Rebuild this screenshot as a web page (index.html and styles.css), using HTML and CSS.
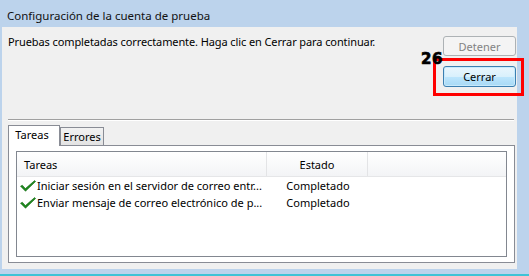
FILE: index.html
```html
<html>
<head>
    <meta charset="utf-8">
    <title>Configuración de la cuenta de prueba</title>
    <link rel="stylesheet" href="styles.css">
</head>
<body>
    <div class="window">
        <div class="titlebar">Configuración de la cuenta de prueba</div>
        <div class="content">
            <div class="top">
                <p class="message">Pruebas completadas correctamente. Haga clic en Cerrar para continuar.</p>
                <div class="buttons">
                    <button class="btn" disabled>Detener</button>
                    <button class="btn btn-default">Cerrar</button>
                </div>
            </div>
            <div class="separator"></div>
            <div class="tabs">
                <div class="tab tab-active">Tareas</div>
                <div class="tab">Errores</div>
            </div>
            <div class="panel">
                <div class="list">
                    <div class="list-head">
                        <div class="col-task">Tareas</div>
                        <div class="col-state">Estado</div>
                        <div class="col-rest"></div>
                    </div>
                    <div class="row">
                        <div class="col-task">
                            <svg class="check" viewBox="0 0 16 12" width="16" height="12">
                                <path d="M0.5 6.2 L2.3 5.2 L5.4 8.6 L14.6 0.6 L15.6 1.5 L5.5 11.2 Z" fill="#1f8a1f" stroke="#126812" stroke-width="0.6" stroke-linejoin="round"/>
                            </svg>
                            <span>Iniciar sesión en el servidor de correo entr...</span>
                        </div>
                        <div class="col-state">Completado</div>
                    </div>
                    <div class="row">
                        <div class="col-task">
                            <svg class="check" viewBox="0 0 16 12" width="16" height="12">
                                <path d="M0.5 6.2 L2.3 5.2 L5.4 8.6 L14.6 0.6 L15.6 1.5 L5.5 11.2 Z" fill="#1f8a1f" stroke="#126812" stroke-width="0.6" stroke-linejoin="round"/>
                            </svg>
                            <span>Enviar mensaje de correo electrónico de p...</span>
                        </div>
                        <div class="col-state">Completado</div>
                    </div>
                </div>
            </div>
        </div>
        <div class="bottom-edge"></div>

        <div class="highlight"></div>
        <div class="step-num">26</div>
    </div>
</body>
</html>
```

FILE: styles.css
```css
body {
    margin: 0;
    background-color: #bcd3ec;
    font-family: "Noto Sans", "Open Sans", sans-serif;
    font-size: 11px;
    color: #000;
}
.window {
    position: relative;
    width: 529px;
    height: 276px;
    overflow: hidden;
    display: flex;
    flex-direction: column;
}
.titlebar {
    height: 27px;
    line-height: 31px;
    padding-left: 7px;
    font-size: 11.5px;
    color: #111;
}
.content {
    margin-left: 2px;
    width: 515px;
    height: 242px;
    box-sizing: border-box;
    padding: 7px 2px 0 6px;
    background-color: #f0f0f0;
}
.top {
    display: flex;
    justify-content: space-between;
    align-items: flex-start;
}
.message {
    margin: 0;
    line-height: 16px;
    letter-spacing: -0.1px;
}
.buttons {
    display: flex;
    flex-direction: column;
    gap: 10px;
    margin-top: 2px;
    margin-right: -1px;
}
.btn {
    width: 73px;
    height: 20px;
    padding: 0;
    border: 1px solid #adb2b5;
    border-radius: 3px;
    background: #f4f4f4;
    color: #838383;
    font-family: inherit;
    font-size: 11px;
}
.btn-default {
    height: 21px;
    border-color: #3c7fb1;
    color: #000;
    background: linear-gradient(#eaf6fd, #d9f0fc 50%, #bee6fd 50%, #a7d9f5);
    box-shadow: inset 0 0 0 1px #c8e9fb;
}
.separator {
    margin: 32px 1px 0 0;
    height: 1px;
    background-color: #a0a0a0;
    border-bottom: 1px solid #fff;
}
.tabs {
    display: flex;
    align-items: flex-end;
    height: 20px;
    margin-top: 4px;
}
.tab {
    box-sizing: border-box;
    width: 44px;
    height: 18px;
    line-height: 18px;
    border: 1px solid #898c95;
    border-bottom: none;
    background: linear-gradient(#f2f2f2, #e3e3e3);
    text-align: center;
}
.tab-active {
    position: relative;
    z-index: 1;
    width: 52px;
    height: 21px;
    line-height: 18px;
    margin-bottom: -1px;
    padding-right: 4px;
    background: #fff;
}
.panel {
    box-sizing: border-box;
    height: 118px;
    padding: 5px 7px;
    border: 1px solid #898c95;
    background: #fff;
}
.list {
    height: 106px;
    box-sizing: border-box;
    border: 1px solid #828790;
    background: #fff;
}
.list-head {
    display: flex;
    height: 25px;
    line-height: 25px;
    background: linear-gradient(#fff, #f3f4f6);
    border-bottom: 1px solid #e5e6e8;
    box-sizing: border-box;
}
.list-head .col-task {
    padding-left: 7px;
    border-right: 1px solid #e3e4e6;
}
.list-head .col-state {
    border-right: 1px solid #e3e4e6;
}
.col-task {
    width: 250px;
    box-sizing: border-box;
    white-space: nowrap;
    overflow: hidden;
}
.col-state {
    width: 100px;
    text-align: center;
}
.col-rest {
    flex: 1;
}
.row {
    display: flex;
    height: 17px;
    line-height: 17px;
}
.row .col-task {
    display: flex;
    align-items: center;
    padding-left: 3px;
    gap: 1px;
}
.row .col-state {
    padding-left: 1px;
}
.check {
    flex: none;
}
.bottom-edge {
    margin-top: 5px;
    height: 2px;
    background-color: #3fc3d6;
}
.highlight {
    position: absolute;
    left: 433px;
    top: 58px;
    width: 91px;
    height: 38px;
    box-sizing: border-box;
    border: 3px solid #f00;
}
.step-num {
    position: absolute;
    left: 421px;
    top: 52px;
    font-family: "DejaVu Sans", sans-serif;
    font-weight: bold;
    font-size: 15px;
    line-height: 15px;
    letter-spacing: 0.5px;
    color: #000;
    -webkit-text-stroke: 0.7px #000;
}
```
